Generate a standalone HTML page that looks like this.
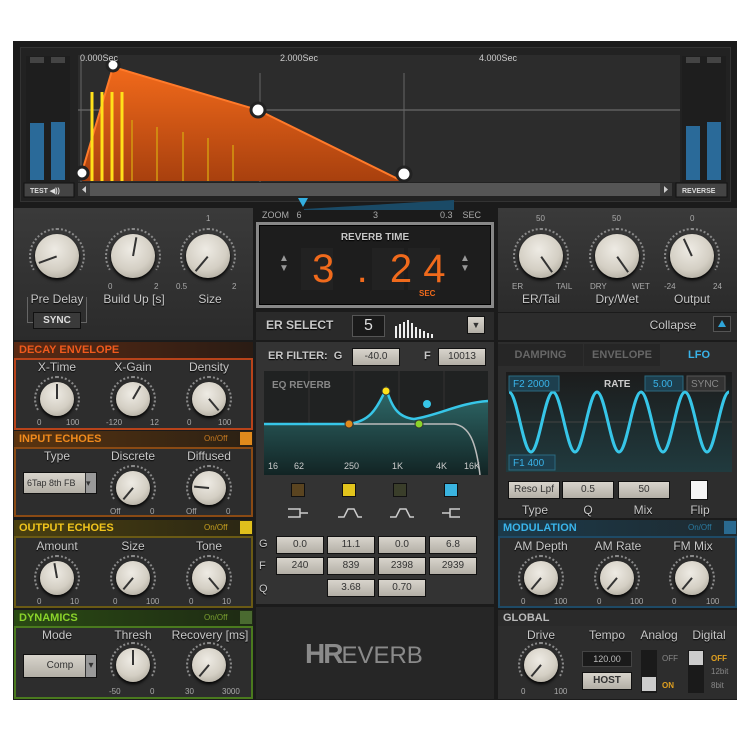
<!DOCTYPE html>
<html><head><meta charset="utf-8"><style>
*{box-sizing:border-box;margin:0;padding:0}
body{width:750px;height:750px;background:#fff;position:relative;overflow:hidden;font-family:"Liberation Sans",sans-serif}
.a{position:absolute}
.lbl{position:absolute;color:#c8c8c8;font-size:12px;text-align:center;text-shadow:0 1px 1px #000}
.sm{position:absolute;color:#aaa;font-size:8px}
.k{position:absolute;border-radius:50%;background:radial-gradient(circle at 45% 35%,#eeebe4 0,#d4cfc4 55%,#9e998d 100%);box-shadow:0 2px 3px #000}
.k::before{content:"";position:absolute;left:-6px;top:-6px;right:-6px;bottom:-6px;border-radius:50%;border:2px dotted #8a8a8a;clip-path:polygon(0 0,100% 0,100% 80%,50% 50%,0 80%)}
.k i{position:absolute;left:calc(50% - 1px);top:6%;width:2px;height:44%;background:#333;transform-origin:50% 100%}
.hdr{position:absolute;height:16px;font-weight:bold;font-size:11px;line-height:16px;padding-left:5px}
.btn{position:absolute;background:linear-gradient(#d8d4cc,#b3afa6);color:#333;font-size:9px;text-align:center;border:1px solid #111;}
.sq{position:absolute;width:12px;height:12px}
</style></head><body>
<div class="a" style="left:13px;top:41px;width:724px;height:659px;background:#1b1b1b"></div>
<div class="a" style="left:20px;top:47px;width:711px;height:155px;background:#222;border:1px solid #333"></div>
<div class="a" style="left:78px;top:55px;width:602px;height:127px;background:#2c2c2c"></div>
<div class="a" style="left:26px;top:56px;width:44px;height:126px;background:#1e1e1e"></div>
<div class="a" style="left:30px;top:57px;width:14px;height:6px;background:#444"></div>
<div class="a" style="left:51px;top:57px;width:14px;height:6px;background:#444"></div>
<div class="a" style="left:30px;top:123px;width:14px;height:57px;background:#2a6a99"></div>
<div class="a" style="left:51px;top:122px;width:14px;height:58px;background:#2a6a99"></div>
<div class="a" style="left:682px;top:56px;width:44px;height:126px;background:#1e1e1e"></div>
<div class="a" style="left:686px;top:57px;width:14px;height:6px;background:#444"></div>
<div class="a" style="left:707px;top:57px;width:14px;height:6px;background:#444"></div>
<div class="a" style="left:686px;top:126px;width:14px;height:54px;background:#2a6a99"></div>
<div class="a" style="left:707px;top:122px;width:14px;height:58px;background:#2a6a99"></div>
<svg class="a" style="left:0;top:0" width="750" height="210">
<line x1="78" y1="110" x2="680" y2="110" stroke="#777"/>
<line x1="260" y1="73" x2="260" y2="182" stroke="#666"/>
<line x1="404" y1="73" x2="404" y2="182" stroke="#666"/>
<line x1="81" y1="60" x2="81" y2="182" stroke="#666"/>
<defs><linearGradient id="og" x1="0" y1="0" x2="0" y2="1"><stop offset="0" stop-color="#f26a1b"/><stop offset="1" stop-color="#a8400e"/></linearGradient></defs>
<polygon points="82,172 113,67 258,110 402,181 82,181" fill="url(#og)"/>
<polyline points="82,172 113,67 258,110 402,181" fill="none" stroke="#ff7a2a" stroke-width="2"/>
<g stroke="#ffe11a" stroke-width="3"><line x1="92" y1="92" x2="92" y2="181"/><line x1="102" y1="92" x2="102" y2="181"/><line x1="112" y1="92" x2="112" y2="181"/><line x1="122" y1="92" x2="122" y2="181"/></g>
<g stroke="#d49a10" stroke-width="1.5"><line x1="132" y1="120" x2="132" y2="181"/><line x1="157" y1="127" x2="157" y2="181"/><line x1="183" y1="132" x2="183" y2="181"/><line x1="208" y1="138" x2="208" y2="181"/><line x1="233" y1="145" x2="233" y2="181"/></g>
<g fill="#fff" stroke="#222" stroke-width="3"><circle cx="113" cy="65" r="6"/><circle cx="258" cy="110" r="7"/><circle cx="82" cy="173" r="6"/><circle cx="404" cy="174" r="7"/></g>
<text x="80" y="61" fill="#ccc" font-size="9" font-family="Liberation Sans">0.000Sec</text>
<text x="280" y="61" fill="#ccc" font-size="9" font-family="Liberation Sans">2.000Sec</text>
<text x="479" y="61" fill="#ccc" font-size="9" font-family="Liberation Sans">4.000Sec</text>
<rect x="78" y="183" width="594" height="13" fill="#555"/>
<rect x="78" y="183" width="12" height="13" fill="#3a3a3a"/><rect x="660" y="183" width="12" height="13" fill="#3a3a3a"/>
<polygon points="86,186 86,193 82,189.5" fill="#ccc"/><polygon points="664,186 664,193 668,189.5" fill="#ccc"/>
<rect x="24" y="183" width="50" height="14" fill="#444" stroke="#111"/>
<text x="30" y="193" fill="#ddd" font-size="7" font-weight="bold" font-family="Liberation Sans">TEST ◀))</text>
<rect x="676" y="183" width="51" height="14" fill="#444" stroke="#111"/>
<text x="682" y="193" fill="#ddd" font-size="7" font-weight="bold" font-family="Liberation Sans">REVERSE</text>
<polygon points="298,198 308,198 303,207" fill="#33aee0"/>
<polygon points="304,209 454,200 454,212 304,212" fill="#1a4a66"/>
</svg>
<div class="sm" style="left:262px;top:210px;font-size:9px">ZOOM&nbsp;&nbsp; 6</div>
<div class="sm" style="left:373px;top:210px;font-size:9px">3</div>
<div class="sm" style="left:440px;top:210px;font-size:9px">0.3&nbsp;&nbsp;&nbsp; SEC</div>
<div class="a" style="left:14px;top:208px;width:239px;height:132px;background:linear-gradient(#3a3a3a,#2b2b2b)"></div>
<div class="a" style="left:498px;top:208px;width:239px;height:104px;background:linear-gradient(#3a3a3a,#2b2b2b)"></div>
<div class="a" style="left:498px;top:313px;width:239px;height:27px;background:#2c2c2c"></div>
<div class="k" style="left:35px;top:234px;width:44px;height:44px"><i style="transform:rotate(-110deg)"></i></div>
<div class="k" style="left:111px;top:234px;width:44px;height:44px"><i style="transform:rotate(10deg)"></i></div>
<div class="k" style="left:186px;top:234px;width:44px;height:44px"><i style="transform:rotate(-140deg)"></i></div>
<div class="sm" style="left:108px;top:282px">0</div><div class="sm" style="left:154px;top:282px">2</div>
<div class="sm" style="left:176px;top:282px">0.5</div><div class="sm" style="left:232px;top:282px">2</div><div class="sm" style="left:206px;top:214px">1</div>
<div class="lbl" style="left:25px;top:292px;width:64px">Pre Delay</div>
<div class="lbl" style="left:100px;top:292px;width:68px">Build Up [s]</div>
<div class="lbl" style="left:188px;top:292px;width:44px">Size</div>
<div class="a" style="left:27px;top:297px;width:60px;height:26px;border:1px solid #666;border-top:none"></div>
<div class="btn" style="left:33px;top:312px;width:48px;height:17px;background:#3a3a3a;color:#ddd;font-weight:bold;line-height:15px;font-size:10px">SYNC</div>
<div class="k" style="left:519px;top:234px;width:44px;height:44px"><i style="transform:rotate(145deg)"></i></div>
<div class="k" style="left:595px;top:234px;width:44px;height:44px"><i style="transform:rotate(145deg)"></i></div>
<div class="k" style="left:670px;top:234px;width:44px;height:44px"><i style="transform:rotate(-25deg)"></i></div>
<div class="sm" style="left:536px;top:214px">50</div><div class="sm" style="left:612px;top:214px">50</div><div class="sm" style="left:690px;top:214px">0</div>
<div class="sm" style="left:512px;top:282px">ER</div><div class="sm" style="left:556px;top:282px">TAIL</div>
<div class="sm" style="left:590px;top:282px">DRY</div><div class="sm" style="left:632px;top:282px">WET</div>
<div class="sm" style="left:664px;top:282px">-24</div><div class="sm" style="left:713px;top:282px">24</div>
<div class="lbl" style="left:516px;top:292px;width:50px">ER/Tail</div>
<div class="lbl" style="left:590px;top:292px;width:54px">Dry/Wet</div>
<div class="lbl" style="left:667px;top:292px;width:50px">Output</div>
<div class="lbl" style="left:648px;top:318px;width:50px">Collapse</div>
<div class="a" style="left:713px;top:316px;width:18px;height:16px;background:#222;border:1px solid #555"></div>
<div class="a" style="left:718px;top:320px;width:0;height:0;border-left:4px solid transparent;border-right:4px solid transparent;border-bottom:7px solid #2fa6da"></div>
<div class="a" style="left:256px;top:222px;width:238px;height:86px;background:#888;padding:3px"><div style="width:100%;height:100%;background:#1d1d1d;border:1px solid #000"></div></div>
<div class="lbl" style="left:310px;top:232px;width:130px;font-size:10px;font-weight:bold">REVERB TIME</div>
<div class="a" style="left:301px;top:248px;width:32px;height:42px;background:#222"></div>
<div class="a" style="left:372px;top:248px;width:32px;height:42px;background:#222"></div>
<div class="a" style="left:408px;top:248px;width:32px;height:42px;background:#222"></div>
<div class="a" style="left:301px;top:245px;width:150px;height:48px;color:#f06a1c;font-size:40px;line-height:48px;white-space:pre"> 3  .  2 4</div>
<div class="a" style="left:419px;top:289px;color:#f06a1c;font-size:8px;font-weight:bold">SEC</div>
<div class="a" style="left:279px;top:254px;color:#999;font-size:10px;line-height:10px">▲<br>▼</div>
<div class="a" style="left:460px;top:254px;color:#999;font-size:10px;line-height:10px">▲<br>▼</div>
<div class="a" style="left:256px;top:312px;width:238px;height:28px;background:#2a2a2a"></div>
<div class="lbl" style="left:266px;top:318px;font-size:12px;font-weight:bold">ER SELECT</div>
<div class="a" style="left:352px;top:315px;width:33px;height:22px;background:#1a1a1a;border:1px solid #555;color:#ddd;font-size:16px;text-align:center;line-height:20px">5</div>
<svg class="a" style="left:393px;top:318px" width="50" height="20"><g fill="#eee"><rect x="2" y="8" width="2" height="12"/><rect x="6" y="6" width="2" height="14"/><rect x="10" y="4" width="2" height="16"/><rect x="14" y="2" width="2" height="18"/><rect x="18" y="5" width="2" height="15"/><rect x="22" y="9" width="2" height="11"/><rect x="26" y="11" width="2" height="9"/><rect x="30" y="13" width="2" height="7"/><rect x="34" y="15" width="2" height="5"/><rect x="38" y="16" width="2" height="4"/></g></svg>
<div class="btn" style="left:467px;top:316px;width:18px;height:18px;font-size:9px;line-height:16px">▼</div>
<div class="hdr" style="left:14px;top:342px;width:239px;background:linear-gradient(90deg,#5a2a14,#2a1c14);color:#f05a1c">DECAY ENVELOPE</div>
<div class="a" style="left:14px;top:358px;width:239px;height:72px;background:#2d2d2d;border:2px solid #b8431a"></div>
<div class="hdr" style="left:14px;top:431px;width:239px;background:linear-gradient(90deg,#5a3410,#2a2014);color:#f08a1c">INPUT ECHOES</div>
<div class="a" style="left:14px;top:447px;width:239px;height:70px;background:#2d2d2d;border:2px solid #8a4a14"></div>
<div class="hdr" style="left:14px;top:520px;width:239px;background:linear-gradient(90deg,#4a4010,#2a2614);color:#f0c41c">OUTPUT ECHOES</div>
<div class="a" style="left:14px;top:536px;width:239px;height:72px;background:#2d2d2d;border:2px solid #6a5a14"></div>
<div class="hdr" style="left:14px;top:610px;width:239px;background:linear-gradient(90deg,#2a4a14,#1e2a14);color:#8ad42a">DYNAMICS</div>
<div class="a" style="left:14px;top:626px;width:239px;height:73px;background:#2d2d2d;border:2px solid #4a7a1e"></div>
<div class="sm" style="left:204px;top:434px;color:#c77a20">On/Off</div><div class="a" style="left:240px;top:432px;width:12px;height:13px;background:#e08a1c"></div>
<div class="sm" style="left:204px;top:523px;color:#c7a020">On/Off</div><div class="a" style="left:240px;top:521px;width:12px;height:13px;background:#e0c01c"></div>
<div class="sm" style="left:204px;top:613px;color:#7aa030">On/Off</div><div class="a" style="left:240px;top:611px;width:12px;height:13px;background:#4a6a30"></div>
<div class="lbl" style="left:27px;top:360px;width:60px">X-Time</div><div class="lbl" style="left:103px;top:360px;width:60px">X-Gain</div><div class="lbl" style="left:179px;top:360px;width:60px">Density</div>
<div class="k" style="left:40px;top:382px;width:34px;height:34px"><i style="transform:rotate(0deg)"></i></div>
<div class="k" style="left:116px;top:382px;width:34px;height:34px"><i style="transform:rotate(30deg)"></i></div>
<div class="k" style="left:192px;top:382px;width:34px;height:34px"><i style="transform:rotate(140deg)"></i></div>
<div class="sm" style="left:37px;top:418px">0</div><div class="sm" style="left:66px;top:418px">100</div><div class="sm" style="left:106px;top:418px">-120</div><div class="sm" style="left:150px;top:418px">12</div><div class="sm" style="left:187px;top:418px">0</div><div class="sm" style="left:218px;top:418px">100</div>
<div class="lbl" style="left:27px;top:449px;width:60px">Type</div><div class="lbl" style="left:103px;top:449px;width:60px">Discrete</div><div class="lbl" style="left:179px;top:449px;width:60px">Diffused</div>
<div class="btn" style="left:23px;top:472px;width:74px;height:22px;font-size:9px;line-height:20px;text-align:left;padding-left:3px">6Tap 8th FB<span style="position:absolute;right:0;top:0;width:11px;height:20px;background:#999;border-left:1px solid #333">▾</span></div>
<div class="k" style="left:116px;top:471px;width:34px;height:34px"><i style="transform:rotate(-140deg)"></i></div>
<div class="k" style="left:192px;top:471px;width:34px;height:34px"><i style="transform:rotate(-85deg)"></i></div>
<div class="sm" style="left:110px;top:507px">Off</div><div class="sm" style="left:150px;top:507px">0</div><div class="sm" style="left:186px;top:507px">Off</div><div class="sm" style="left:226px;top:507px">0</div>
<div class="lbl" style="left:27px;top:539px;width:60px">Amount</div><div class="lbl" style="left:103px;top:539px;width:60px">Size</div><div class="lbl" style="left:179px;top:539px;width:60px">Tone</div>
<div class="k" style="left:40px;top:561px;width:34px;height:34px"><i style="transform:rotate(-10deg)"></i></div>
<div class="k" style="left:116px;top:561px;width:34px;height:34px"><i style="transform:rotate(-140deg)"></i></div>
<div class="k" style="left:192px;top:561px;width:34px;height:34px"><i style="transform:rotate(140deg)"></i></div>
<div class="sm" style="left:37px;top:597px">0</div><div class="sm" style="left:70px;top:597px">10</div><div class="sm" style="left:113px;top:597px">0</div><div class="sm" style="left:146px;top:597px">100</div><div class="sm" style="left:189px;top:597px">0</div><div class="sm" style="left:222px;top:597px">10</div>
<div class="lbl" style="left:27px;top:628px;width:60px">Mode</div><div class="lbl" style="left:103px;top:628px;width:60px">Thresh</div><div class="lbl" style="left:167px;top:628px;width:86px">Recovery [ms]</div>
<div class="btn" style="left:23px;top:654px;width:74px;height:24px;font-size:10px;line-height:22px">Comp<span style="position:absolute;right:0;top:0;width:11px;height:22px;background:#999;border-left:1px solid #333">▾</span></div>
<div class="k" style="left:116px;top:648px;width:34px;height:34px"><i style="transform:rotate(0deg)"></i></div>
<div class="k" style="left:192px;top:648px;width:34px;height:34px"><i style="transform:rotate(-140deg)"></i></div>
<div class="sm" style="left:109px;top:687px">-50</div><div class="sm" style="left:150px;top:687px">0</div><div class="sm" style="left:185px;top:687px">30</div><div class="sm" style="left:222px;top:687px">3000</div>
<div class="a" style="left:256px;top:342px;width:238px;height:262px;background:#333"></div>
<div class="lbl" style="left:268px;top:350px;font-size:11px;font-weight:bold">ER FILTER:&nbsp; G</div>
<div class="btn" style="left:352px;top:348px;width:48px;height:18px;font-size:10px;line-height:16px">-40.0</div>
<div class="lbl" style="left:424px;top:350px;font-size:11px;font-weight:bold">F</div>
<div class="btn" style="left:438px;top:348px;width:48px;height:18px;font-size:10px;line-height:16px">10013</div>
<svg class="a" style="left:264px;top:371px" width="224" height="104">
<rect width="224" height="104" fill="#202222"/>
<g stroke="#333"><line x1="45" y1="0" x2="45" y2="104"/><line x1="90" y1="0" x2="90" y2="104"/><line x1="135" y1="0" x2="135" y2="104"/><line x1="180" y1="0" x2="180" y2="104"/></g>
<defs><linearGradient id="tg" x1="0" y1="0" x2="0" y2="1"><stop offset="0" stop-color="#2f6a6a"/><stop offset="1" stop-color="#122424"/></linearGradient></defs>
<path d="M0,53 L85,53 C105,50 112,40 122,18 C128,34 132,46 150,48 C175,44 195,32 224,30 L224,104 L0,104 Z" fill="url(#tg)"/>
<path d="M0,53 L85,53 C105,50 112,40 122,18 C128,34 132,46 150,48 C175,44 195,32 224,30" fill="none" stroke="#37c6e8" stroke-width="2.5"/>
<path d="M90,53 L190,53 C205,55 212,70 216,104" fill="none" stroke="#bbb" stroke-width="1.5"/>
<circle cx="85" cy="53" r="4" fill="#e08a1c" stroke="#333"/><circle cx="122" cy="20" r="4" fill="#ffe11a" stroke="#333"/><circle cx="155" cy="53" r="4" fill="#8ad42a" stroke="#333"/><circle cx="163" cy="33" r="4" fill="#37c6e8"/>
<text x="8" y="17" fill="#888" font-size="10" font-weight="bold" font-family="Liberation Sans">EQ REVERB</text>
<g fill="#ccc" font-size="9" font-family="Liberation Sans"><text x="4" y="98">16</text><text x="30" y="98">62</text><text x="80" y="98">250</text><text x="128" y="98">1K</text><text x="172" y="98">4K</text><text x="200" y="98">16K</text></g>
</svg>
<div class="sq" style="left:291px;top:483px;width:14px;height:14px;background:#5a4420;border:1px solid #111"></div>
<div class="sq" style="left:342px;top:483px;width:14px;height:14px;background:#e2c41c;border:1px solid #111"></div>
<div class="sq" style="left:393px;top:483px;width:14px;height:14px;background:#3a3e2a;border:1px solid #111"></div>
<div class="sq" style="left:444px;top:483px;width:14px;height:14px;background:#3ab4e0;border:1px solid #111"></div>
<svg class="a" style="left:286px;top:506px" width="180" height="14" fill="none" stroke="#ccc" stroke-width="1.5">
<path d="M2,3 H14 V11 H2 M14,7 H22"/><path d="M52,11 H58 L62,3 H68 L72,11 H76"/><path d="M104,11 H110 L114,3 H120 L124,11 H128"/><path d="M156,7 H164 M174,3 H164 V11 H174"/></svg>
<div class="lbl" style="left:259px;top:538px;font-size:11px">G</div><div class="lbl" style="left:259px;top:560px;font-size:11px">F</div><div class="lbl" style="left:259px;top:583px;font-size:11px">Q</div>
<div class="btn" style="left:276px;top:536px;width:48px;height:18px;font-size:10px;line-height:16px">0.0</div>
<div class="btn" style="left:327px;top:536px;width:48px;height:18px;font-size:10px;line-height:16px">11.1</div>
<div class="btn" style="left:378px;top:536px;width:48px;height:18px;font-size:10px;line-height:16px">0.0</div>
<div class="btn" style="left:429px;top:536px;width:48px;height:18px;font-size:10px;line-height:16px">6.8</div>
<div class="btn" style="left:276px;top:557px;width:48px;height:18px;font-size:10px;line-height:16px">240</div>
<div class="btn" style="left:327px;top:557px;width:48px;height:18px;font-size:10px;line-height:16px">839</div>
<div class="btn" style="left:378px;top:557px;width:48px;height:18px;font-size:10px;line-height:16px">2398</div>
<div class="btn" style="left:429px;top:557px;width:48px;height:18px;font-size:10px;line-height:16px">2939</div>
<div class="btn" style="left:327px;top:579px;width:48px;height:18px;font-size:10px;line-height:16px">3.68</div>
<div class="btn" style="left:378px;top:579px;width:48px;height:18px;font-size:10px;line-height:16px">0.70</div>
<div class="a" style="left:256px;top:607px;width:238px;height:92px;background:#262626"></div>
<div class="a" style="left:305px;top:638px;color:#8a8a8a;font-size:28px;line-height:32px"><b style="letter-spacing:-2px">HR</b><span style="font-size:24px">EVERB</span></div>
<div class="a" style="left:498px;top:342px;width:239px;height:176px;background:#2d2d2d"></div>
<div class="a" style="left:498px;top:344px;width:85px;height:22px;background:#262626;color:#666;font-size:11px;font-weight:bold;text-align:center;line-height:22px">DAMPING</div>
<div class="a" style="left:584px;top:344px;width:76px;height:22px;background:#262626;color:#666;font-size:11px;font-weight:bold;text-align:center;line-height:22px">ENVELOPE</div>
<div class="a" style="left:661px;top:344px;width:76px;height:22px;background:#2d2d2d;color:#39b4ea;font-size:11px;font-weight:bold;text-align:center;line-height:22px">LFO</div>
<svg class="a" style="left:506px;top:372px" width="226" height="100">
<defs><linearGradient id="lg" x1="0" y1="0" x2="0" y2="1"><stop offset="0" stop-color="#1c1c1c"/><stop offset="1" stop-color="#203a3e"/></linearGradient></defs>
<rect width="226" height="100" fill="url(#lg)"/>
<line x1="0" y1="50" x2="226" y2="50" stroke="#444"/>
<path d="M3,20 C11,20 17,80 25,80 S39,20 47,20 S61,80 69,80 S83,20 91,20 S105,80 113,80 S127,20 135,20 S149,80 157,80 S171,20 179,20 S193,80 201,80 S215,20 223,20" fill="none" stroke="#37c6e8" stroke-width="3"/>
<rect x="3" y="4" width="50" height="15" fill="#1d3f4e" stroke="#2a6a80"/><text x="7" y="15" fill="#39b4ea" font-size="10" font-family="Liberation Sans">F2 2000</text>
<rect x="3" y="83" width="46" height="15" fill="#1d3f4e" stroke="#2a6a80"/><text x="7" y="94" fill="#39b4ea" font-size="10" font-family="Liberation Sans">F1  400</text>
<text x="98" y="15" fill="#ccc" font-size="10" font-weight="bold" font-family="Liberation Sans">RATE</text>
<rect x="139" y="4" width="38" height="15" fill="#1d3f4e" stroke="#2a6a80"/><text x="147" y="15" fill="#39b4ea" font-size="10" font-family="Liberation Sans">5.00</text>
<rect x="181" y="4" width="38" height="15" fill="#333" stroke="#555"/><text x="185" y="15" fill="#888" font-size="10" font-family="Liberation Sans">SYNC</text>
</svg>
<div class="btn" style="left:508px;top:481px;width:52px;height:18px;font-size:10px;line-height:16px">Reso Lpf</div>
<div class="btn" style="left:562px;top:481px;width:52px;height:18px;font-size:10px;line-height:16px">0.5</div>
<div class="btn" style="left:618px;top:481px;width:52px;height:18px;font-size:10px;line-height:16px">50</div>
<div class="a" style="left:690px;top:480px;width:18px;height:20px;background:#f4f4f4;border:1px solid #111"></div>
<div class="lbl" style="left:518px;top:503px;width:34px">Type</div><div class="lbl" style="left:578px;top:503px;width:20px">Q</div><div class="lbl" style="left:628px;top:503px;width:30px">Mix</div><div class="lbl" style="left:686px;top:503px;width:28px">Flip</div>
<div class="hdr" style="left:498px;top:520px;width:239px;background:linear-gradient(90deg,#1c3a4a,#1e2a30);color:#39b4ea">MODULATION</div>
<div class="sm" style="left:688px;top:523px;color:#2a7aa0">On/Off</div><div class="a" style="left:724px;top:521px;width:12px;height:13px;background:#2a6a90"></div>
<div class="a" style="left:498px;top:536px;width:239px;height:72px;background:#2d2d2d;border:2px solid #1e4a66"></div>
<div class="lbl" style="left:510px;top:539px;width:62px">AM Depth</div><div class="lbl" style="left:587px;top:539px;width:62px">AM Rate</div><div class="lbl" style="left:662px;top:539px;width:62px">FM Mix</div>
<div class="k" style="left:524px;top:561px;width:34px;height:34px"><i style="transform:rotate(-140deg)"></i></div>
<div class="k" style="left:600px;top:561px;width:34px;height:34px"><i style="transform:rotate(-140deg)"></i></div>
<div class="k" style="left:675px;top:561px;width:34px;height:34px"><i style="transform:rotate(-140deg)"></i></div>
<div class="sm" style="left:521px;top:597px">0</div><div class="sm" style="left:554px;top:597px">100</div><div class="sm" style="left:597px;top:597px">0</div><div class="sm" style="left:630px;top:597px">100</div><div class="sm" style="left:672px;top:597px">0</div><div class="sm" style="left:706px;top:597px">100</div>
<div class="hdr" style="left:498px;top:610px;width:239px;background:#2a2a2a;color:#bbb">GLOBAL</div>
<div class="a" style="left:498px;top:626px;width:239px;height:73px;background:#2d2d2d"></div>
<div class="lbl" style="left:520px;top:628px;width:42px">Drive</div><div class="lbl" style="left:584px;top:628px;width:46px">Tempo</div><div class="lbl" style="left:636px;top:628px;width:46px">Analog</div><div class="lbl" style="left:686px;top:628px;width:46px">Digital</div>
<div class="k" style="left:524px;top:648px;width:34px;height:34px"><i style="transform:rotate(-140deg)"></i></div>
<div class="sm" style="left:521px;top:687px">0</div><div class="sm" style="left:554px;top:687px">100</div>
<div class="a" style="left:582px;top:651px;width:50px;height:16px;background:#1a1a1a;border:1px solid #444;color:#bbb;font-size:9px;text-align:center;line-height:14px">120.00</div>
<div class="btn" style="left:582px;top:672px;width:50px;height:18px;font-size:10px;line-height:16px;font-weight:bold">HOST</div>
<div class="a" style="left:641px;top:650px;width:16px;height:43px;background:#1a1a1a"></div>
<div class="a" style="left:642px;top:677px;width:14px;height:14px;background:#ccc"></div>
<div class="sm" style="left:662px;top:654px;color:#888">OFF</div><div class="sm" style="left:662px;top:681px;color:#e0a020;font-weight:bold">ON</div>
<div class="a" style="left:688px;top:650px;width:16px;height:43px;background:#1a1a1a"></div>
<div class="a" style="left:689px;top:651px;width:14px;height:14px;background:#ccc"></div>
<div class="sm" style="left:711px;top:654px;color:#e0a020;font-weight:bold">OFF</div><div class="sm" style="left:711px;top:667px;color:#888">12bit</div><div class="sm" style="left:711px;top:681px;color:#888">8bit</div>
</body></html>
